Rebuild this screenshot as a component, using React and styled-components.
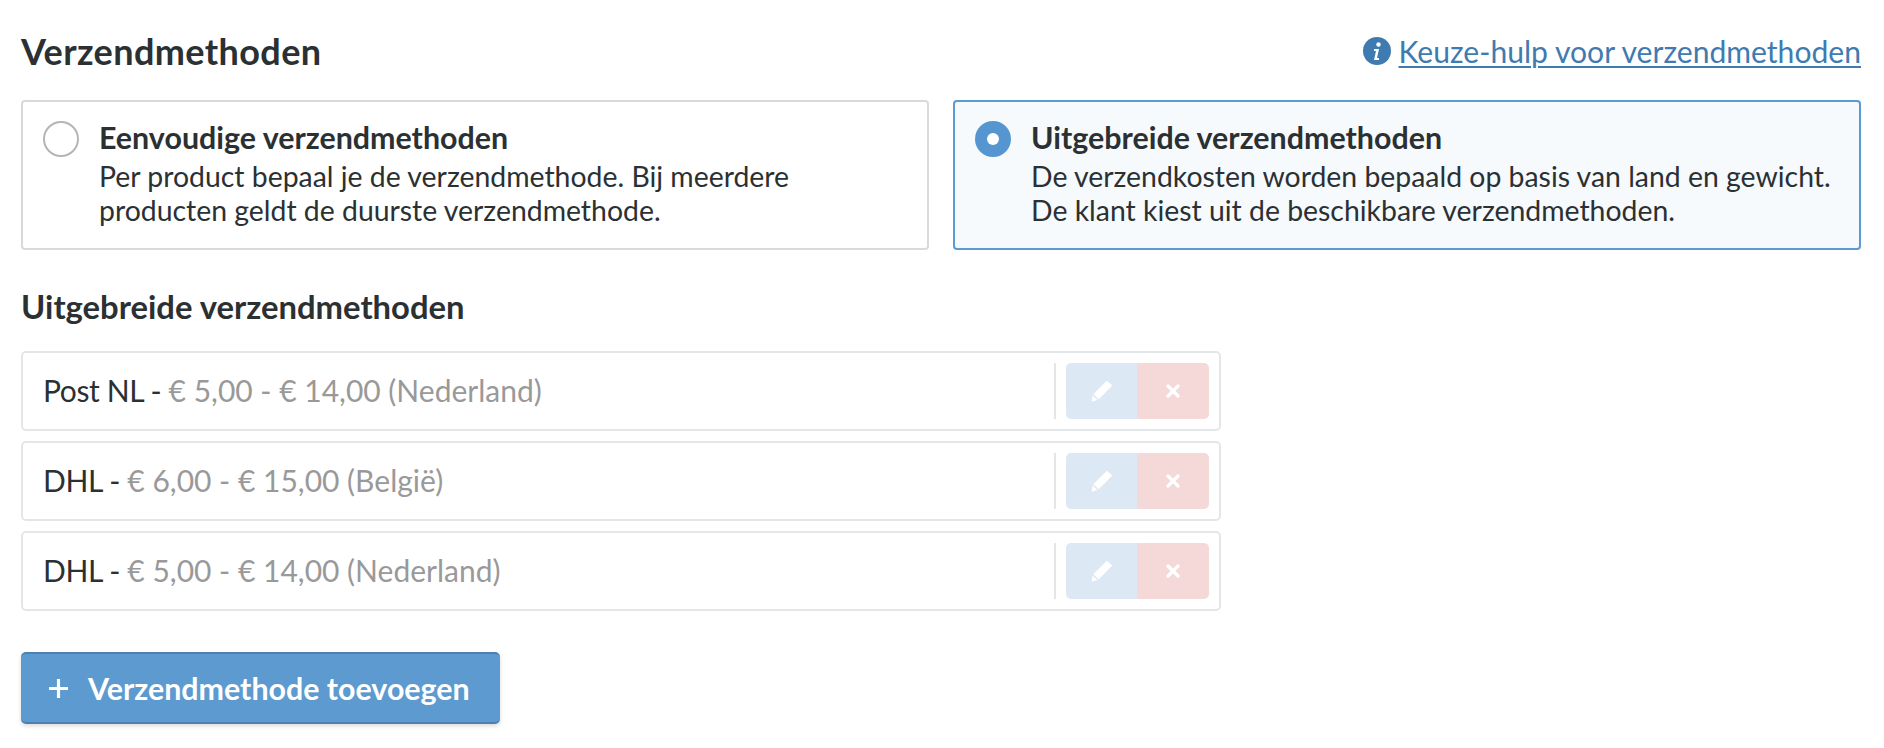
import React from "react";
import styled, { createGlobalStyle } from "styled-components";
import { X } from "lucide-react";

const Global = createGlobalStyle`
  html, body { margin: 0; background: #fff; }
  body { font-family: "Lato", "Liberation Sans", sans-serif; color: #2b3033; }
`;

const Page = styled.div`
  padding: 31px 23px 25px 21px;
`;

const Header = styled.div`
  display: flex;
  align-items: center;
  justify-content: space-between;
  height: 40px;
  margin-bottom: 29px;
`;

const Title = styled.h1`
  margin: 0;
  font-size: 36px;
  font-weight: 700;
  letter-spacing: 0.4px;
  color: #2b3033;
`;

const HelpLink = styled.a`
  display: flex;
  align-items: center;
  gap: 8px;
  font-size: 30.1px;
  color: #3f7bb0;
  text-decoration: underline;
  text-decoration-thickness: 2px;
  text-underline-offset: 3px;
`;

const Choices = styled.div`
  display: grid;
  grid-template-columns: 908px 908px;
  gap: 24px;
  margin-bottom: 40px;
`;

const Choice = styled.div`
  display: flex;
  gap: 20px;
  height: 150px;
  box-sizing: border-box;
  padding: 18px 20px 0 20px;
  border: 2px solid ${(p) => (p.$active ? "#5b9bd1" : "#d9d9d9")};
  border-radius: 4px;
  background: ${(p) => (p.$active ? "#f6fafd" : "#fff")};
`;

const Radio = styled.span`
  flex: none;
  width: 36px;
  height: 36px;
  margin-top: 1px;
  box-sizing: border-box;
  border-radius: 50%;
  display: flex;
  align-items: center;
  justify-content: center;
  border: ${(p) => (p.$active ? "none" : "2px solid #b5b5b5")};
  background: ${(p) => (p.$active ? "#5596d0" : "#fff")};
  &::after {
    content: "";
    display: ${(p) => (p.$active ? "block" : "none")};
    width: 12px;
    height: 12px;
    border-radius: 50%;
    background: #fff;
  }
`;

const ChoiceTitle = styled.div`
  font-size: 30.4px;
  font-weight: 700;
  line-height: 34px;
`;

const ChoiceText = styled.div`
  font-size: 28.4px;
  line-height: 34px;
  margin-top: 5px;
  white-space: nowrap;
`;

const SubTitle = styled.h2`
  margin: 0 0 27px;
  font-size: 32.8px;
  line-height: 34px;
  font-weight: 700;
`;

const List = styled.div`
  width: 1200px;
  display: flex;
  flex-direction: column;
  gap: 10px;
`;

const Row = styled.div`
  display: flex;
  align-items: center;
  height: 80px;
  box-sizing: border-box;
  padding: 0 10px 0 20px;
  border: 2px solid #e3e6e8;
  border-radius: 5px;
`;

const RowText = styled.div`
  flex: 1;
  font-size: 30px;
  padding-bottom: 2px;
  color: #2b3033;
`;

const Name = styled.span`
  letter-spacing: -0.4px;
`;

const Muted = styled.span`
  color: #999;
`;

const Divider = styled.span`
  width: 2px;
  height: 56px;
  background: #e3e6e8;
  margin-right: 10px;
`;

const Actions = styled.div`
  display: flex;
  height: 56px;
  border-radius: 5px;
  overflow: hidden;
`;

const ActionButton = styled.button`
  width: ${(p) => (p.$danger ? "72px" : "71px")};
  padding: 0;
  border: 0;
  display: flex;
  align-items: center;
  justify-content: center;
  color: #fff;
  background: ${(p) => (p.$danger ? "#f5d9d9" : "#dce9f4")};
`;

const AddButton = styled.button`
  display: flex;
  align-items: center;
  gap: 19px;
  margin-top: 41px;
  width: 479px;
  height: 72px;
  box-sizing: border-box;
  padding: 0 0 0 27px;
  border: 0;
  border-top: 2px solid #4a81b0;
  border-bottom: 2px solid #4a81b0;
  border-radius: 5px;
  background: #5c9acf;
  box-shadow: 0 2px 4px rgba(0, 0, 0, 0.15);
  color: #fff;
  font-family: inherit;
  font-size: 30.4px;
  font-weight: 700;
`;

const methods = [
  { name: "Post NL", detail: "€ 5,00 - € 14,00 (Nederland)" },
  { name: "DHL", detail: "€ 6,00 - € 15,00 (België)" },
  { name: "DHL", detail: "€ 5,00 - € 14,00 (Nederland)" },
];

function InfoIcon() {
  return (
    <svg width="28" height="28" viewBox="0 0 28 28">
      <circle cx="14" cy="14" r="14" fill="#3f7bb0" />
      <circle cx="15.5" cy="7.5" r="2.2" fill="#fff" />
      <path d="M11 12h5l-2 9h2v2h-5l2-9h-2z" fill="#fff" />
    </svg>
  );
}

function PencilIcon() {
  return (
    <svg width="24" height="24" viewBox="0 0 22 22">
      <path d="M15.5 1.5l5 4.5L8 18.5l-5-4.5z" fill="#fff" />
      <path d="M2.4 15.2l4.4 4-5.3 1.6z" fill="#fff" />
    </svg>
  );
}

function PlusIcon() {
  return (
    <svg width="21" height="21" viewBox="0 0 20 20">
      <path d="M10 1v18M1 10h18" stroke="#fff" strokeWidth="3" />
    </svg>
  );
}

export default function App() {
  return (
    <Page>
      <Global />
      <Header>
        <Title>Verzendmethoden</Title>
        <HelpLink>
          <InfoIcon />
          Keuze-hulp voor verzendmethoden
        </HelpLink>
      </Header>
      <Choices>
        <Choice>
          <Radio />
          <div>
            <ChoiceTitle>Eenvoudige verzendmethoden</ChoiceTitle>
            <ChoiceText>
              Per product bepaal je de verzendmethode. Bij meerdere
              <br />
              producten geldt de duurste verzendmethode.
            </ChoiceText>
          </div>
        </Choice>
        <Choice $active>
          <Radio $active />
          <div>
            <ChoiceTitle>Uitgebreide verzendmethoden</ChoiceTitle>
            <ChoiceText>
              De verzendkosten worden bepaald op basis van land en gewicht.
              <br />
              De klant kiest uit de beschikbare verzendmethoden.
            </ChoiceText>
          </div>
        </Choice>
      </Choices>
      <SubTitle>Uitgebreide verzendmethoden</SubTitle>
      <List>
        {methods.map((m, i) => (
          <Row key={i}>
            <RowText>
              <Name>{m.name} - </Name>
              <Muted>{m.detail}</Muted>
            </RowText>
            <Divider />
            <Actions>
              <ActionButton>
                <PencilIcon />
              </ActionButton>
              <ActionButton $danger>
                <X size={20} strokeWidth={4} />
              </ActionButton>
            </Actions>
          </Row>
        ))}
      </List>
      <AddButton>
        <PlusIcon />
        Verzendmethode toevoegen
      </AddButton>
    </Page>
  );
}
